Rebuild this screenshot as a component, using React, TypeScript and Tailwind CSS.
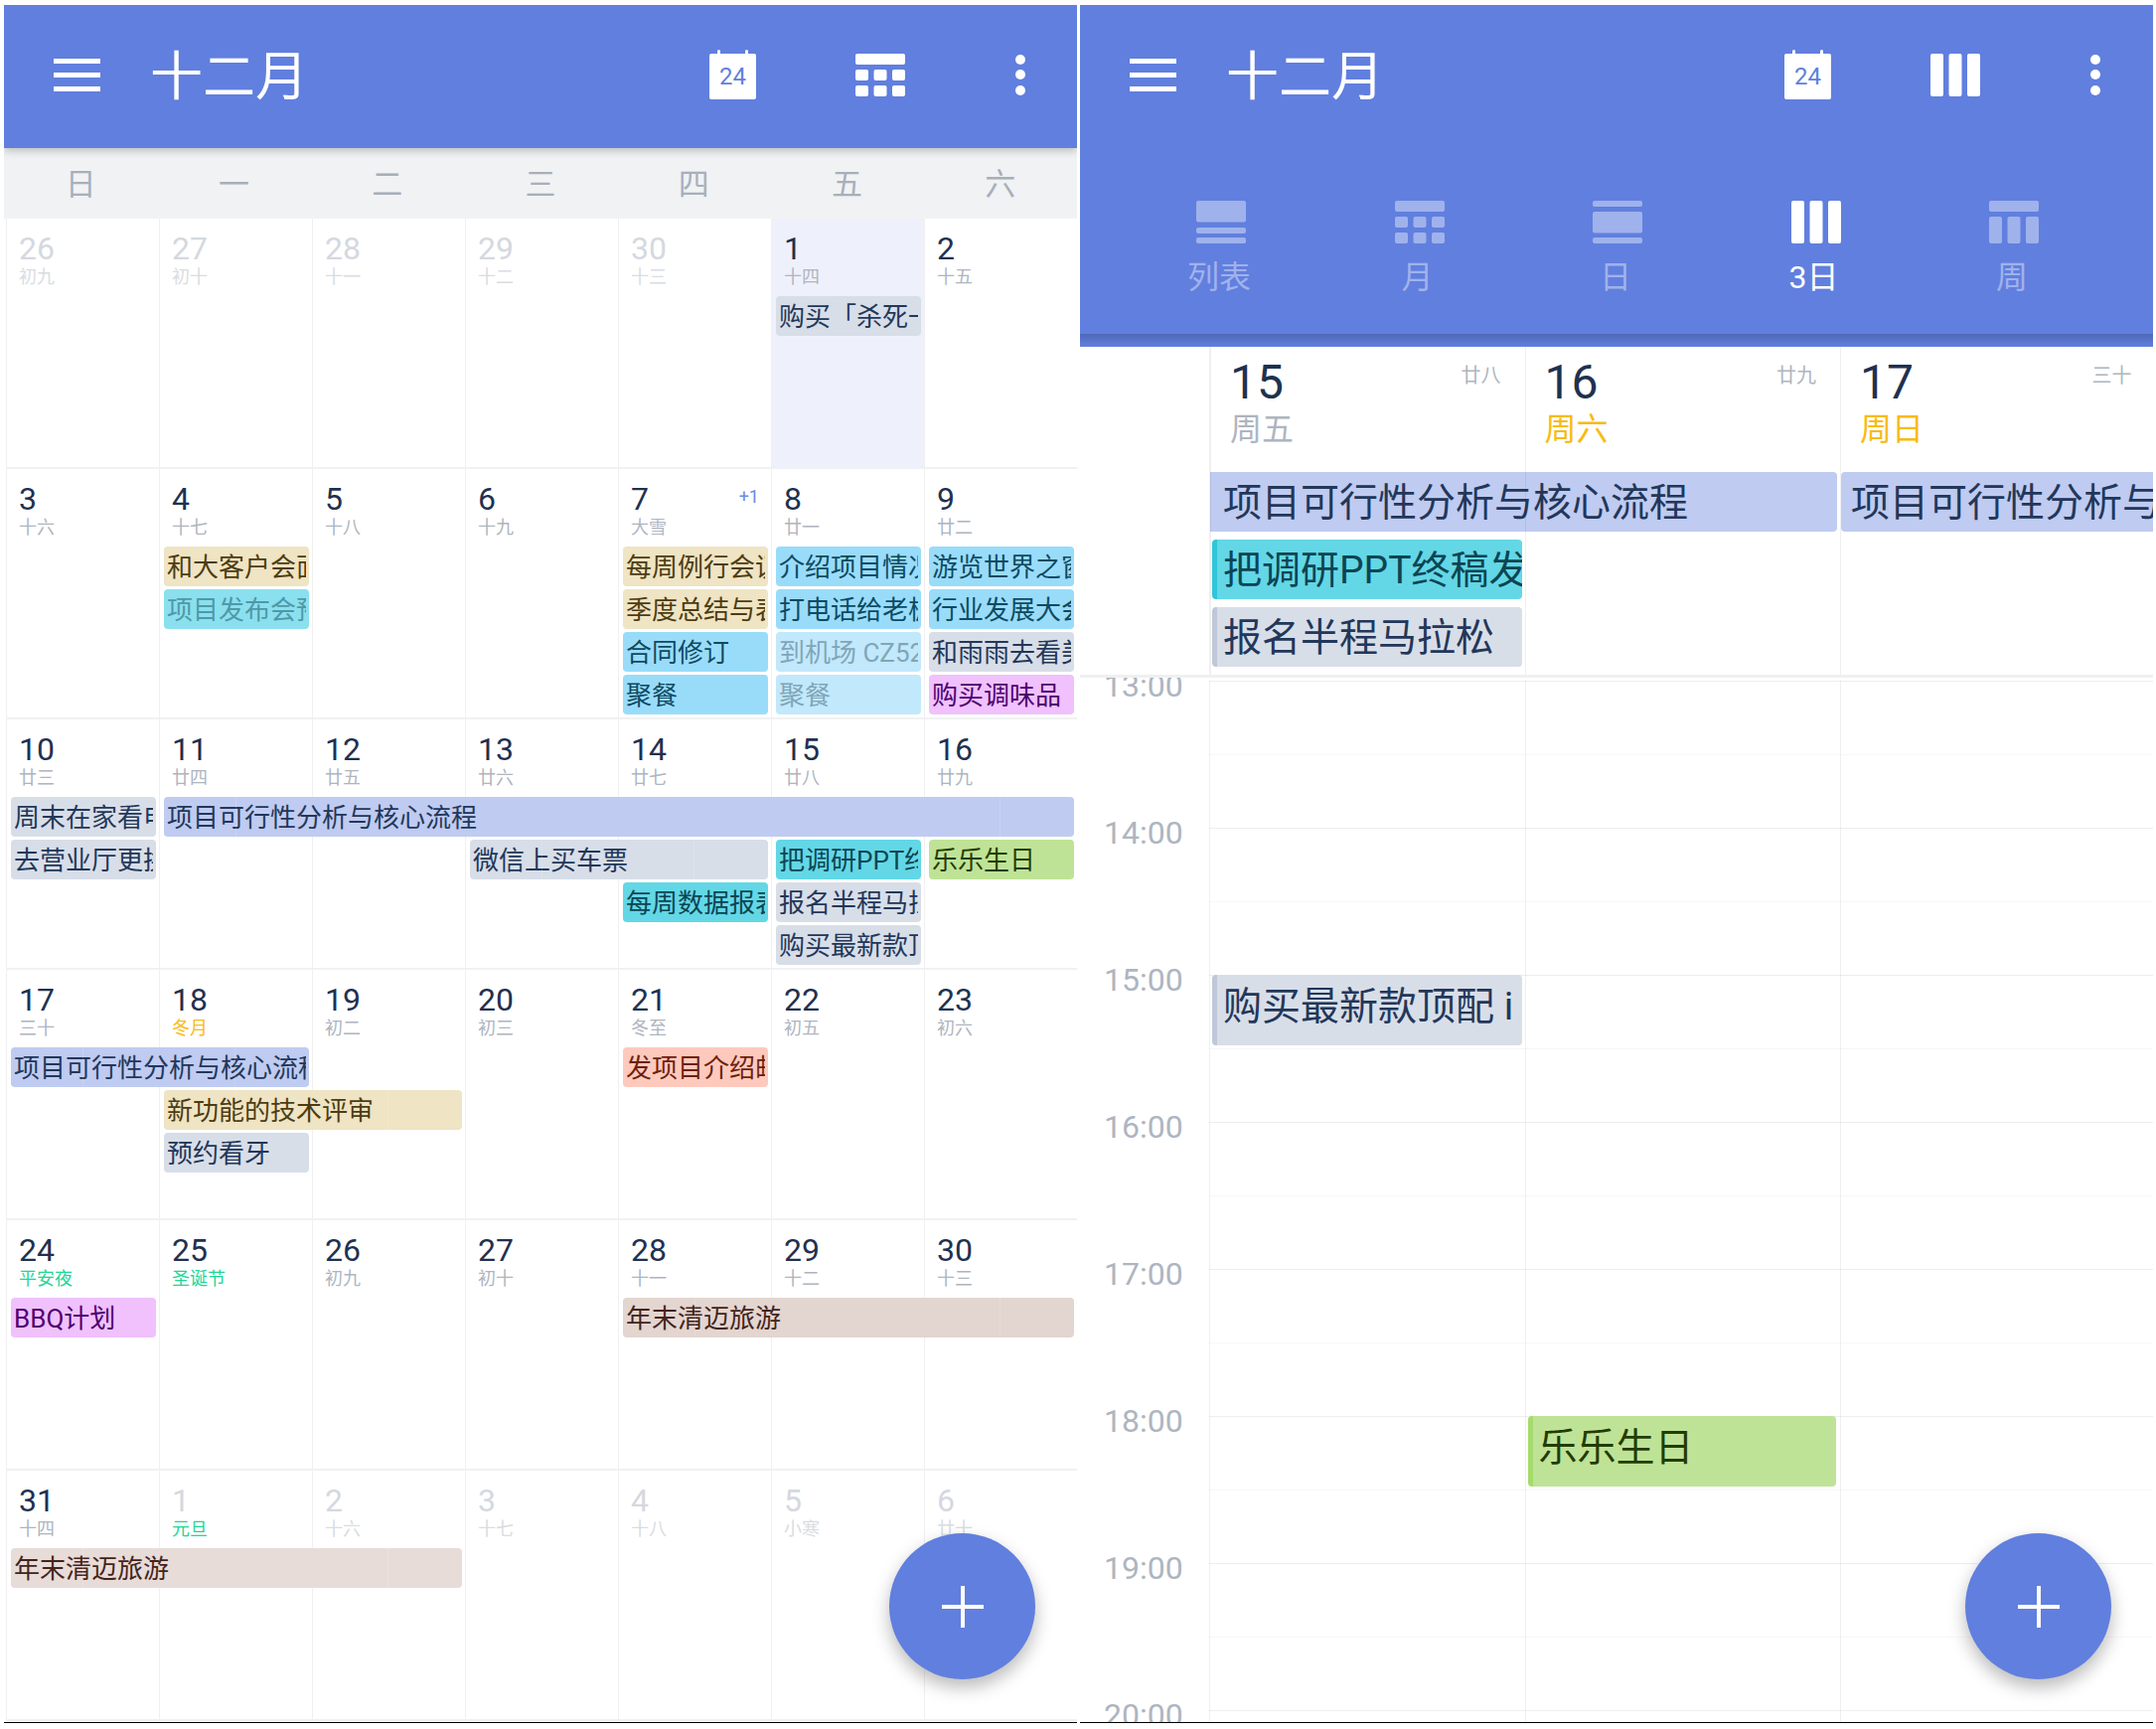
import React from "react";

type Tone = "gray" | "tan" | "blue" | "paleBlue" | "teal" | "dimTeal" | "green" | "pink" | "brown" | "paleBrown" | "salmon" | "indigo";

const tones: Record<Tone, string> = {
  gray: "bg-[#d8dee8] text-[#22375a]",
  tan: "bg-[#efe4c3] text-[#4d3c12]",
  blue: "bg-[#99dcfa] text-[#0d4a62]",
  paleBlue: "bg-[#c2e8fc] text-[#7fa6b8]",
  teal: "bg-[#63d7e6] text-[#0c4552]",
  dimTeal: "bg-[#8ae0ee] text-[#4f98a8]",
  green: "bg-[#bfe396] text-[#233c00]",
  pink: "bg-[#f0c1fd] text-[#4d0070]",
  brown: "bg-[#e3d5d0] text-[#44231a]",
  paleBrown: "bg-[#e8dcd8] text-[#44231a]",
  salmon: "bg-[#fec9bd] text-[#6e1f0c]",
  indigo: "bg-[#bfcbf1] text-[#22375a]",
};

const colClass = ["col-start-1", "col-start-2", "col-start-3", "col-start-4", "col-start-5", "col-start-6", "col-start-7"];

interface Day {
  n: number;
  lunar: string;
  off?: boolean;
  mark?: "gold" | "green";
  more?: string;
}

interface Chip {
  pos: string;
  text: string;
  tone: Tone;
}

const d = (n: number, lunar: string, extra: Partial<Day> = {}): Day => ({ n, lunar, ...extra });
const off = { off: true };

const weeks: { days: Day[]; chips: Chip[]; today?: string }[] = [
  {
    today: "col-start-6",
    days: [d(26, "初九", off), d(27, "初十", off), d(28, "十一", off), d(29, "十二", off), d(30, "十三", off), d(1, "十四"), d(2, "十五")],
    chips: [{ pos: "col-start-6 row-start-2", text: "购买「杀死一只知更鸟」", tone: "gray" }],
  },
  {
    days: [d(3, "十六"), d(4, "十七"), d(5, "十八"), d(6, "十九"), d(7, "大雪", { more: "+1" }), d(8, "廿一"), d(9, "廿二")],
    chips: [
      { pos: "col-start-2 row-start-2", text: "和大客户会面", tone: "tan" },
      { pos: "col-start-2 row-start-3", text: "项目发布会预演", tone: "dimTeal" },
      { pos: "col-start-5 row-start-2", text: "每周例行会议", tone: "tan" },
      { pos: "col-start-5 row-start-3", text: "季度总结与表彰", tone: "tan" },
      { pos: "col-start-5 row-start-4", text: "合同修订", tone: "blue" },
      { pos: "col-start-5 row-start-5", text: "聚餐", tone: "blue" },
      { pos: "col-start-6 row-start-2", text: "介绍项目情况", tone: "blue" },
      { pos: "col-start-6 row-start-3", text: "打电话给老板", tone: "blue" },
      { pos: "col-start-6 row-start-4", text: "到机场 CZ5226", tone: "paleBlue" },
      { pos: "col-start-6 row-start-5", text: "聚餐", tone: "paleBlue" },
      { pos: "col-start-7 row-start-2", text: "游览世界之窗", tone: "blue" },
      { pos: "col-start-7 row-start-3", text: "行业发展大会", tone: "blue" },
      { pos: "col-start-7 row-start-4", text: "和雨雨去看美展", tone: "gray" },
      { pos: "col-start-7 row-start-5", text: "购买调味品", tone: "pink" },
    ],
  },
  {
    days: [d(10, "廿三"), d(11, "廿四"), d(12, "廿五"), d(13, "廿六"), d(14, "廿七"), d(15, "廿八"), d(16, "廿九")],
    chips: [
      { pos: "col-start-1 row-start-2", text: "周末在家看电影", tone: "gray" },
      { pos: "col-start-1 row-start-3", text: "去营业厅更换", tone: "gray" },
      { pos: "col-start-2 col-span-6 row-start-2", text: "项目可行性分析与核心流程", tone: "indigo" },
      { pos: "col-start-4 col-span-2 row-start-3", text: "微信上买车票", tone: "gray" },
      { pos: "col-start-5 row-start-4", text: "每周数据报表", tone: "teal" },
      { pos: "col-start-6 row-start-3", text: "把调研PPT终稿发", tone: "teal" },
      { pos: "col-start-6 row-start-4", text: "报名半程马拉松", tone: "gray" },
      { pos: "col-start-6 row-start-5", text: "购买最新款顶配 iPhone", tone: "gray" },
      { pos: "col-start-7 row-start-3", text: "乐乐生日", tone: "green" },
    ],
  },
  {
    days: [d(17, "三十"), d(18, "冬月", { mark: "gold" }), d(19, "初二"), d(20, "初三"), d(21, "冬至"), d(22, "初五"), d(23, "初六")],
    chips: [
      { pos: "col-start-1 col-span-2 row-start-2", text: "项目可行性分析与核心流程", tone: "indigo" },
      { pos: "col-start-2 col-span-2 row-start-3", text: "新功能的技术评审", tone: "tan" },
      { pos: "col-start-2 row-start-4", text: "预约看牙", tone: "gray" },
      { pos: "col-start-5 row-start-2", text: "发项目介绍邮件", tone: "salmon" },
    ],
  },
  {
    days: [d(24, "平安夜", { mark: "green" }), d(25, "圣诞节", { mark: "green" }), d(26, "初九"), d(27, "初十"), d(28, "十一"), d(29, "十二"), d(30, "十三")],
    chips: [
      { pos: "col-start-1 row-start-2", text: "BBQ计划", tone: "pink" },
      { pos: "col-start-5 col-span-3 row-start-2", text: "年末清迈旅游", tone: "brown" },
    ],
  },
  {
    days: [d(31, "十四"), d(1, "元旦", { off: true, mark: "green" }), d(2, "十六", off), d(3, "十七", off), d(4, "十八", off), d(5, "小寒", off), d(6, "廿十", off)],
    chips: [{ pos: "col-start-1 col-span-3 row-start-2", text: "年末清迈旅游", tone: "paleBrown" }],
  },
];

const hours = ["13:00", "14:00", "15:00", "16:00", "17:00", "18:00", "19:00", "20:00"];

// icons, all drawn on the same 50x43 box
const GridIcon = ({ rects, className }: { rects: number[][]; className?: string }) => (
  <svg viewBox="0 0 50 43" className={`w-[50px] h-[43px] ${className ?? ""}`} fill="currentColor">
    {rects.map(([x, y, w, h], i) => (
      <rect key={i} x={x} y={y} width={w} height={h} rx="2" />
    ))}
  </svg>
);

const cols3 = (y: number, h: number) => [[0, y, 13, h], [18.5, y, 13, h], [37, y, 13, h]];

const viewRects = {
  list: [[0, 0, 50, 21.5], [0, 27, 50, 6], [0, 37, 50, 6]],
  month: [[0, 0, 50, 11], ...cols3(16, 11), ...cols3(32, 11)],
  day: [[0, 0, 50, 6], [0, 11, 50, 21.5], [0, 37, 50, 6]],
  three: cols3(0, 43),
  week: [[0, 0, 50, 11], ...cols3(16, 27)],
};

const Hamburger = () => (
  <div className="w-[47px] flex flex-col gap-[9px]">
    <div className="h-[5px] bg-white" />
    <div className="h-[5px] bg-white" />
    <div className="h-[5px] bg-white" />
  </div>
);

const Kebab = () => (
  <div className="w-[10px] flex flex-col gap-[5.5px]">
    <div className="h-[10px] rounded-full bg-white" />
    <div className="h-[10px] rounded-full bg-white" />
    <div className="h-[10px] rounded-full bg-white" />
  </div>
);

const TodayIcon = () => (
  <div className="relative w-[47px] h-[46px] mt-[4px] rounded-[2px] bg-white flex items-center justify-center text-[24px] leading-none text-[#617fde]">
    <span className="absolute left-[8px] -top-[4px] w-[3px] h-[6px] rounded-t-full bg-white" />
    <span className="absolute right-[8px] -top-[4px] w-[3px] h-[6px] rounded-t-full bg-white" />
    24
  </div>
);

const TopBar = ({ rects, edge }: { rects: number[][]; edge: string }) => (
  <div className={`h-[140px] flex items-center pl-[50px] text-white ${edge}`}>
    <Hamburger />
    <div className="ml-[50px] mt-[6px] text-[53px] leading-none">十二月</div>
    <div className="ml-auto">
      <TodayIcon />
    </div>
    <GridIcon rects={rects} className="ml-[100px]" />
    <div className="ml-[111px]">
      <Kebab />
    </div>
  </div>
);

const Fab = () => (
  <div className="absolute right-[42px] bottom-[43px] w-[147px] h-[147px] rounded-full bg-[#617fde] shadow-[0_8px_18px_rgba(0,0,0,0.28)] flex items-center justify-center">
    <svg viewBox="0 0 42 42" className="w-[42px] h-[42px]" stroke="white" strokeWidth="4" fill="none">
      <path d="M21 0v42M0 21h42" />
    </svg>
  </div>
);

const MonthChip = ({ chip }: { chip: Chip }) => (
  <div className={`${chip.pos} ${tones[chip.tone]} relative h-[40px] ml-[5px] mr-[3px] pl-[3px] pr-[3px] rounded-[4px] text-[26px] leading-[42px] min-w-0 overflow-hidden`}>
    <div className="overflow-hidden whitespace-nowrap">{chip.text}</div>
    {/* faint joints where the multi-day pieces meet */}
    {chip.pos.includes("col-span") && (
      <>
        <span className="absolute left-[72px] inset-y-0 w-px bg-white/15" />
        <span className="absolute right-[74px] inset-y-0 w-px bg-white/15" />
      </>
    )}
  </div>
);

const lunarColor = (day: Day) => {
  if (day.mark === "gold") return "text-[#f8bb12]";
  if (day.mark === "green") return "text-[#1ed696]";
  return day.off ? "text-[#d9dce1]" : "text-[#aeb5c0]";
};

const MonthCell = ({ day, col }: { day: Day; col: number }) => (
  <div className={`${colClass[col]} row-span-full border-l border-black/[0.06] pl-[12px] pt-[14px] pr-[12px]`}>
    <div className="flex justify-between items-start">
      <div className={`text-[32px] leading-[32px] ${day.off ? "text-[#d5d8df]" : "text-[#1f3150]"}`}>{day.n}</div>
      {day.more && <div className="text-[18px] leading-[24px] mt-[2px] text-[#6b8ae8]">{day.more}</div>}
    </div>
    <div className={`text-[18px] leading-[18px] mt-[4px] ${lunarColor(day)}`}>{day.lunar}</div>
  </div>
);

const MonthPanel = () => (
  <div className="relative w-[1080px] h-[1729px] border-b border-black overflow-hidden">
    <div className="relative z-10 h-[144px] bg-[#617fde] shadow-[0_3px_8px_rgba(0,0,0,0.22)]">
      <TopBar rects={viewRects.month} edge="pr-[52px]" />
    </div>
    <div className="h-[71px] bg-[#f0f2f4] pt-[2px] grid grid-cols-7 items-center text-center text-[31px] leading-none text-[#a8afba]">
      {["日", "一", "二", "三", "四", "五", "六"].map((w) => (
        <div key={w}>{w}</div>
      ))}
    </div>
    <div className="pl-[2px]">
      {weeks.map((week, i) => (
        <div key={i} className="h-[252px] border-b-2 border-[#f0f1f3] grid grid-cols-[repeat(7,154px)] grid-rows-[78px_repeat(4,43px)_1fr]">
          {week.today && <div className={`${week.today} row-span-full ml-px bg-[#eef1fc]`} />}
          {week.chips.map((chip) => (
            <MonthChip key={chip.text + chip.pos} chip={chip} />
          ))}
          {week.days.map((day, col) => (
            <MonthCell key={col} day={day} col={col} />
          ))}
        </div>
      ))}
    </div>
    <Fab />
  </div>
);

const tabs = [
  { label: "列表", rects: viewRects.list },
  { label: "月", rects: viewRects.month },
  { label: "日", rects: viewRects.day },
  { label: "3日", rects: viewRects.three, active: true },
  { label: "周", rects: viewRects.week },
];

const DayHead = ({ n, week, lunar, weekend, col }: { n: number; week: string; lunar: string; weekend?: boolean; col: string }) => (
  <div className={`${col} row-span-full flex justify-between border-black/[0.06] pl-[19px] pr-[24px] pt-[12px] ${col === "col-start-2" ? "border-l-2" : "border-l"}`}>
    <div>
      <div className="text-[48px] leading-[48px] text-[#1f3150]">{n}</div>
      <div className={`text-[32px] leading-[32px] mt-[7px] ${weekend ? "text-[#f8bb12]" : "text-[#aeb5c0]"}`}>{week}</div>
    </div>
    <div className="text-[20px] leading-[20px] mt-[7px] text-[#aeb5c0]">{lunar}</div>
  </div>
);

const ThreeDayPanel = () => (
  <div className="relative w-[1080px] h-[1729px] border-b border-black overflow-hidden">
    <div className="h-[344px] bg-[#617fde] flex flex-col">
      <TopBar rects={viewRects.three} edge="pr-[53px]" />
      <div className="pl-[42px] flex h-[191px] pt-[57px]">
        {tabs.map((tab) => (
          <div key={tab.label} className={`w-[199.5px] pl-[75px] flex flex-col ${tab.active ? "text-white" : "text-[#a0b2ec]"}`}>
            <GridIcon rects={tab.rects} />
            <div className="w-[50px] -ml-[2px] mt-[18px] text-[32px] leading-[32px] whitespace-nowrap flex justify-center">{tab.label}</div>
          </div>
        ))}
      </div>
      <div className="mt-auto h-[13px] bg-gradient-to-b from-[#4f68b8] to-[#617fde]" />
    </div>
    <div className="grid grid-cols-[130px_repeat(3,317.5px)] grid-rows-[126px_repeat(3,68px)] overflow-hidden">
      <div className={`${tones.indigo} col-start-2 col-span-2 row-start-2 h-[60px] ml-[1px] mr-[3px] pl-[13px] rounded-r-[4px] text-[39px] leading-[62px] whitespace-nowrap`}>
        项目可行性分析与核心流程
      </div>
      <div className={`${tones.indigo} col-start-4 row-start-2 h-[60px] ml-px pl-[10px] rounded-l-[4px] text-[39px] leading-[62px] whitespace-nowrap overflow-hidden`}>
        项目可行性分析与核心流程
      </div>
      <div className={`${tones.teal} col-start-2 row-start-3 h-[60px] ml-[3px] mr-[3px] border-l-[5px] border-[#2fc6d8] pl-[6px] rounded-[4px] text-[39px] leading-[62px] whitespace-nowrap overflow-hidden`}>
        把调研PPT终稿发给老板
      </div>
      <div className={`${tones.gray} col-start-2 row-start-4 h-[60px] ml-[3px] mr-[3px] border-l-[5px] border-[#bfc8d8] pl-[6px] rounded-[4px] text-[39px] leading-[62px] whitespace-nowrap overflow-hidden`}>
        报名半程马拉松
      </div>
      <DayHead col="col-start-2" n={15} week="周五" lunar="廿八" />
      <DayHead col="col-start-3" n={16} week="周六" lunar="廿九" weekend />
      <DayHead col="col-start-4" n={17} week="周日" lunar="三十" weekend />
    </div>
    <div className="h-[3px] bg-[#eef0f2] relative z-10" />
    <div className="h-[1051px] overflow-hidden">
      <div className="mt-[3px] grid grid-cols-[130px_repeat(3,317.5px)] grid-rows-[repeat(15,74px)]">
        <div className="col-start-2 col-span-3 row-start-1 row-span-full flex flex-col">
          {Array.from({ length: 15 }, (_, i) => (
            <div key={i} className={`h-[74px] shrink-0 border-t ${i % 2 === 0 ? "border-[#eceef1]" : "border-[#f6f7f8]"}`} />
          ))}
        </div>
        <div className="col-start-1 row-start-1 row-span-full">
          {hours.map((h) => (
            <div key={h} className="h-[148px] pl-[24px] text-[32px] leading-[38px] text-[#aeb5c0] relative -top-[14px]">
              {h}
            </div>
          ))}
        </div>
        <div className="col-start-2 row-start-1 row-span-full border-l border-black/[0.06]" />
        <div className="col-start-3 row-start-1 row-span-full border-l border-black/[0.06]" />
        <div className="col-start-4 row-start-1 row-span-full border-l border-black/[0.06]" />
        <div className={`${tones.gray} col-start-2 row-start-5 h-[71px] ml-[3px] mr-[3px] border-l-[5px] border-[#bfc8d8] pl-[6px] rounded-[4px] text-[39px] leading-[64px] whitespace-nowrap overflow-hidden`}>
          购买最新款顶配 i
        </div>
        <div className={`${tones.green} col-start-3 row-start-11 h-[71px] ml-[3px] mr-[4px] border-l-[5px] border-[#a5db6c] pl-[6px] rounded-[4px] text-[39px] leading-[64px] whitespace-nowrap overflow-hidden`}>
          乐乐生日
        </div>
      </div>
    </div>
    <Fab />
  </div>
);

export default function App() {
  return (
    <div className="w-[2170px] h-[1740px] bg-white flex gap-[3px] pl-[4px] pt-[5px] overflow-hidden font-[Roboto,'Noto_Sans_CJK_SC',sans-serif]">
      <MonthPanel />
      <ThreeDayPanel />
    </div>
  );
}
